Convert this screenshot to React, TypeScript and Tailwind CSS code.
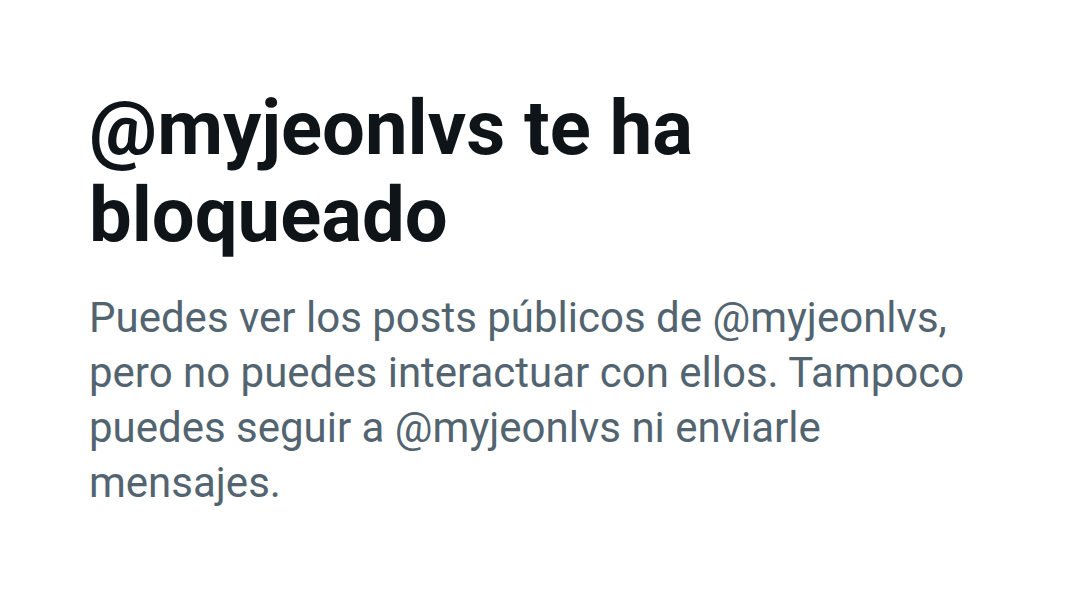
export default function App() {
  return (
    <div className="w-[1080px] h-[614px] bg-white overflow-hidden" style={{ fontFamily: "Roboto, 'Liberation Sans', sans-serif" }}>
      <div className="pl-[89px] pt-[85px] w-[995px]">
        <h1 className="text-[76px] leading-[87px] font-bold text-[#0f1419]">
          @myjeonlvs te ha bloqueado
        </h1>
        <p className="mt-[31px] text-[42px] leading-[55px] text-[#536471]">
          Puedes ver los posts públicos de @myjeonlvs, pero no puedes interactuar con ellos. Tampoco puedes seguir a @myjeonlvs ni enviarle mensajes.
        </p>
      </div>
    </div>
  );
}
